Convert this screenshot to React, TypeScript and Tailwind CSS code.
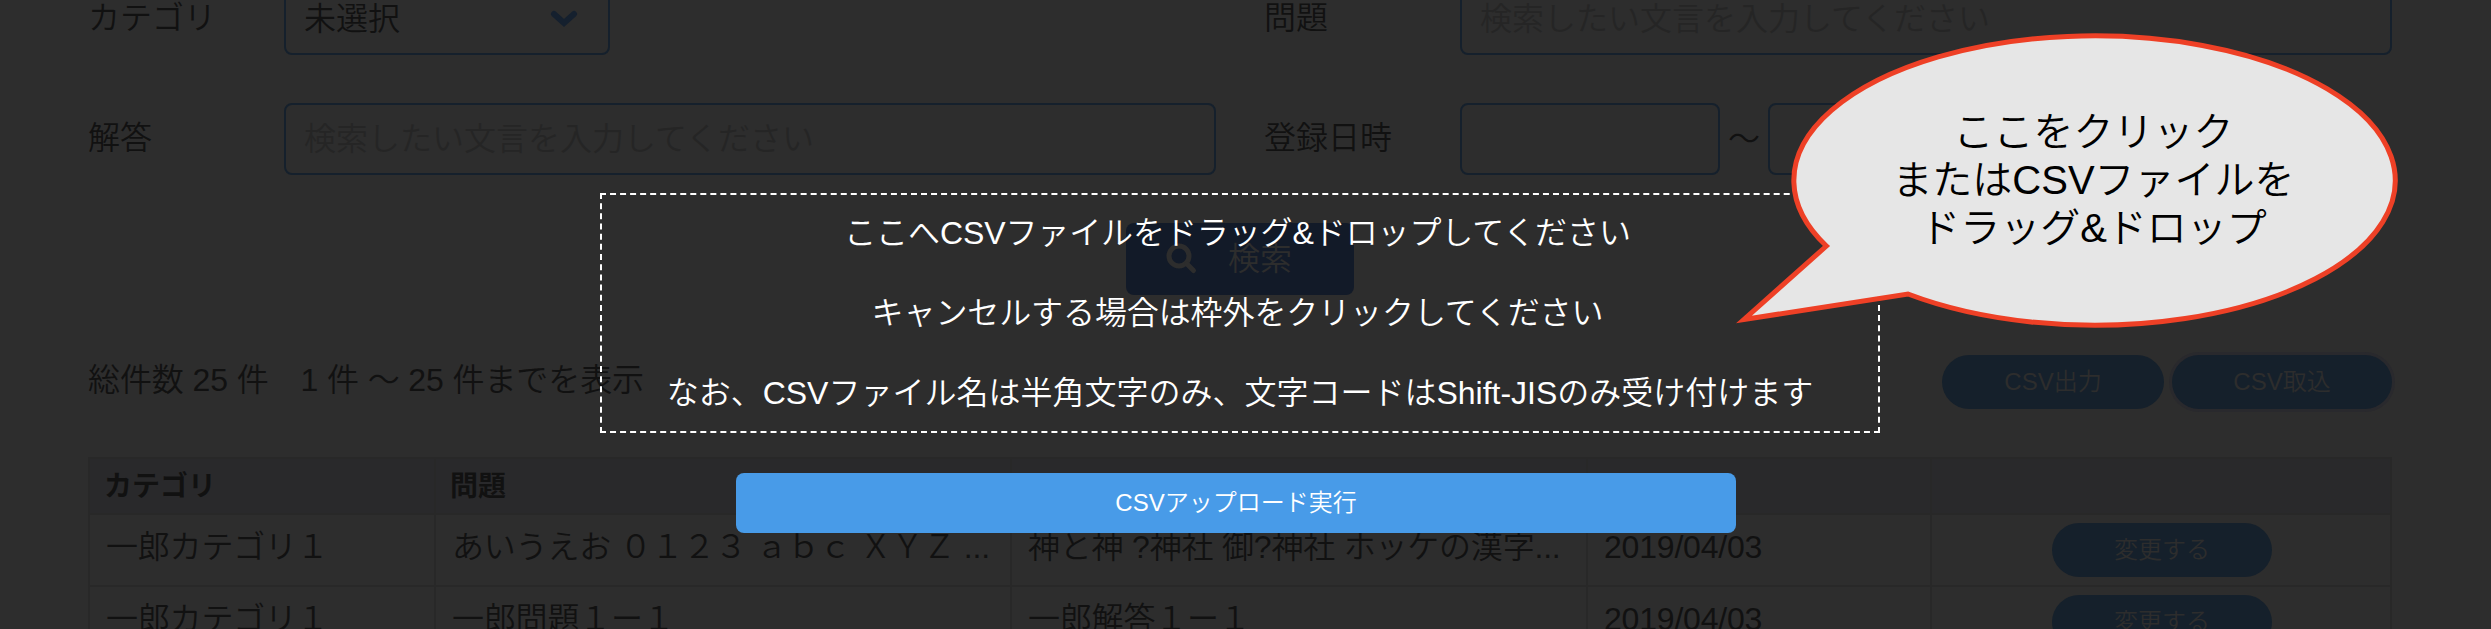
import React from "react";

const PLACEHOLDER = "検索したい文言を入力してください";

function Field({ className = "", children }: { className?: string; children?: React.ReactNode }) {
  return (
    <div className={`flex h-[72px] shrink-0 items-center rounded-[8px] border-2 border-[#15202c] px-[18px] ${className}`}>
      {children}
    </div>
  );
}

function Pill({ children, className = "" }: { children: React.ReactNode; className?: string }) {
  return (
    <button className={`flex h-[54px] shrink-0 items-center justify-center rounded-full bg-[#15202b] text-[24px] text-[#2d2d2d] ${className}`}>
      {children}
    </button>
  );
}

const rows = [
  ["一郎カテゴリ１", "あいうえお ０１２３ ａｂｃ ＸＹＺ ...", "神と神 ?神社 御?神社 ホッケの漢字...", "2019/04/03"],
  ["一郎カテゴリ１", "一郎問題１ー１", "一郎解答１ー１", "2019/04/03"],
];

const COLS = "grid grid-cols-[346px_576px_576px_344px_460px]";

export default function App() {
  return (
    <div className="relative h-[629px] w-[2491px] overflow-hidden bg-[#2d2d2d] font-['Liberation_Sans','Noto_Sans_CJK_JP',sans-serif] text-[32px] leading-none font-[350] text-[#111111]">
      <main className="-mt-[17px] flex flex-col pr-[99px] pl-[88px]">
        <div className="flex h-[72px] items-center">
          <div className="w-[196px] shrink-0 pb-[3px]">カテゴリ</div>
          <Field className="w-[326px] justify-between">
            <span>未選択</span>
            <svg className="mr-[12px] h-[18px] w-[28px]" viewBox="0 0 28 18" fill="none" stroke="#15202e" strokeWidth="6" strokeLinecap="round">
              <path d="M4 4 L14 13 L24 4" />
            </svg>
          </Field>
          <div className="ml-[654px] w-[196px] shrink-0 pb-[3px]">問題</div>
          <Field className="w-[932px] text-[#252525]">{PLACEHOLDER}</Field>
        </div>
        <div className="mt-[48px] flex h-[72px] items-center">
          <div className="w-[196px] shrink-0 pb-[2px]">解答</div>
          <Field className="w-[932px] text-[#252525]">{PLACEHOLDER}</Field>
          <div className="ml-[48px] w-[196px] shrink-0 pb-[2px]">登録日時</div>
          <Field className="w-[260px]" />
          <div className="w-[48px] shrink-0 text-center">〜</div>
          <Field className="w-[260px]" />
        </div>
        <button className="mt-[48px] ml-[1038px] flex h-[72px] w-[228px] items-center rounded-[8px] bg-[#121a28] pl-[40px] text-[#2d2d2d]">
          <svg className="h-[32px] w-[32px]" viewBox="0 0 32 32" fill="none" stroke="#2d2d2d" strokeLinecap="round">
            <circle cx="13" cy="13" r="10" strokeWidth="5" />
            <path d="M21 21 L27.5 27.5" strokeWidth="5" />
          </svg>
          <span className="ml-[30px]">検索</span>
        </button>
        <div className="mt-[60px] flex h-[54px] items-center">
          <div className="flex-1 pb-[4px] tracking-[-0.1px] whitespace-pre">総件数 25 件　1 件 〜 25 件までを表示</div>
          <Pill className="w-[222px]">CSV出力</Pill>
          <Pill className="ml-[8px] w-[220px] ring-3 ring-[#29292d]">CSV取込</Pill>
        </div>
        <div className="mt-[48px] w-[2304px] border-t-2 border-r-2 border-[#282828]">
          <div className={`${COLS} h-[56px] bg-[#29292b] text-[28px] font-bold`}>
            {["カテゴリ", "問題", "", "", ""].map((h, i) => (
              <div key={i} className="flex items-center border-b-2 border-l-2 border-[#282828] pt-[2px] pl-[14px]">{h}</div>
            ))}
          </div>
          {rows.map((r, i) => (
            <div key={i} className={`${COLS} h-[72px]`}>
              {r.map((c, j) => (
                <div key={j} className="flex items-center border-b-2 border-l-2 border-[#282828] pb-[6px] pl-[16px] tracking-[-0.2px] whitespace-pre">{c}</div>
              ))}
              <div className="flex items-center justify-center border-b-2 border-l-2 border-[#282828] pl-[2px]">
                <Pill className="w-[220px]">変更する</Pill>
              </div>
            </div>
          ))}
        </div>
      </main>

      <section className="absolute inset-0 flex flex-col pt-[193px] pl-[600px] text-white">
        <div className="flex h-[240px] w-[1280px] flex-col items-center justify-center gap-[48px] border-2 border-dashed border-white whitespace-nowrap">
          <p className="pr-[5px] tracking-[-0.1px]">ここへCSVファイルをドラッグ&ドロップしてください</p>
          <p className="pr-[5px] tracking-[-0.1px]">キャンセルする場合は枠外をクリックしてください</p>
          <p>なお、CSVファイル名は半角文字のみ、文字コードはShift-JISのみ受け付けます</p>
        </div>
        <button className="mt-[40px] ml-[136px] flex h-[60px] w-[1000px] items-center justify-center rounded-[8px] bg-[#489be8] pb-[1px] text-[24px]">
          CSVアップロード実行
        </button>
      </section>

      <div className="absolute top-[30px] left-[1735px] h-[300px] w-[670px]">
        <svg className="absolute inset-0 h-full w-full" viewBox="1735 30 670 300" fill="#e6e6e6" stroke="#ee4026" strokeWidth="5">
          <path d="M1826.4 246 A300.7 144.7 0 1 1 1908 294 L1744 319.5 Z" />
        </svg>
        <div className="relative flex h-full flex-col items-center pt-[78px] pl-[47px] text-[40px] leading-[48px] whitespace-nowrap text-black">
          <span>ここをクリック</span>
          <span>またはCSVファイルを</span>
          <span>ドラッグ&ドロップ</span>
        </div>
      </div>
    </div>
  );
}
